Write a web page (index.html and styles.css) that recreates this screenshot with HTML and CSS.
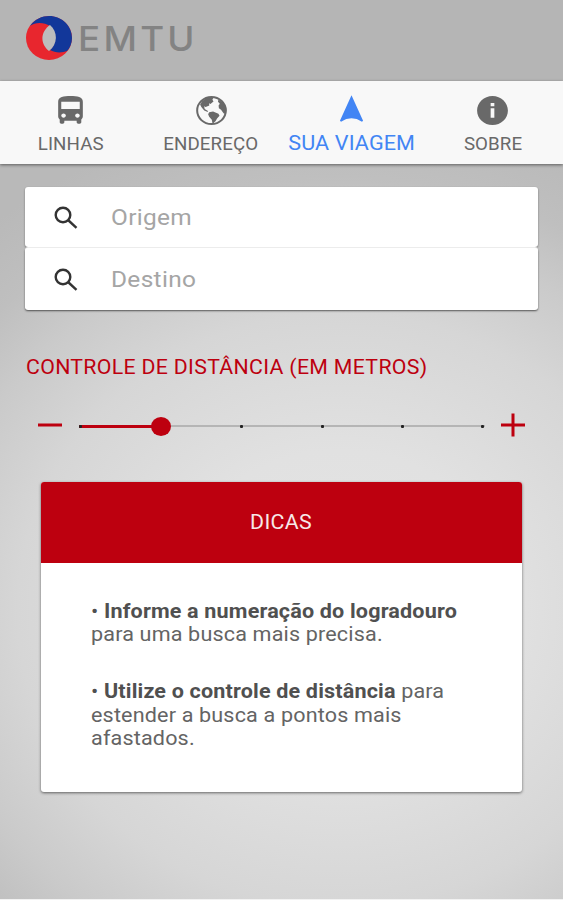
FILE: index.html
```html
<!DOCTYPE html>
<html lang="pt-BR">
<head>
  <meta charset="UTF-8" />
  <meta name="viewport" content="width=device-width, initial-scale=1.0" />
  <title>EMTU - Sua Viagem</title>
  <link rel="stylesheet" href="styles.css">
</head>
<body>
  <header class="header">
    <svg class="logo" viewBox="0 0 46 44" preserveAspectRatio="none">
      <ellipse cx="23" cy="22" rx="23" ry="22" fill="#e8262e" />
      <path d="M4 10C9 3 16 0 23 0C36 0 46 10 46 22C46 27 44 32 41 35C36 37 29 37 24 34C30 29 31 18 24 10C18 6 9 6 4 10Z" fill="#12379a" />
      <path d="M24 9C14 16 14 28 23 35C32 28 32 16 24 9Z" fill="#bdbdbd" />
    </svg>
    <span class="brand">EMTU</span>
  </header>

  <nav class="tabs">
    <a class="tab">
      <svg class="icon" viewBox="0 0 24 24" preserveAspectRatio="none"><path d="M4 16c0 .88.39 1.67 1 2.22V20c0 .55.45 1 1 1h1c.55 0 1-.45 1-1v-1h8v1c0 .55.45 1 1 1h1c.55 0 1-.45 1-1v-1.78c.61-.55 1-1.34 1-2.22V6c0-3.5-3.58-4-8-4s-8 .5-8 4v10zm3.5 1c-.83 0-1.5-.67-1.5-1.5S6.670 14 7.500 14s1.500.67 1.500 1.500S8.330 17 7.500 17zm9 0c-.83 0-1.500-.67-1.500-1.500s.67-1.500 1.500-1.500 1.500.67 1.500 1.500-.67 1.500-1.500 1.500zm1.500-6H6V6h12v5z" /></svg>
      <span class="tab-label">LINHAS</span>
    </a>
    <a class="tab">
      <svg class="icon" viewBox="0 0 24 24" preserveAspectRatio="none">
        <circle cx="12" cy="12" r="9.3" fill="none" stroke="currentColor" stroke-width="1.3" />
        <path d="M6 5.500L9 3.200L13.300 3L12.600 4.600L13.300 5.800L11.300 7.600L10.400 7L10.600 8.600L8.200 9.600L7.200 9L7.600 11L9.700 12.300L9.500 13L7.300 12L5.400 9.600L4.600 7.800Z" />
        <path d="M10.500 13.200L13 12.600L16.500 14.200L17.200 15.600L15.600 17.400L14.700 19.200L12.700 21.200L12.200 18.400L10.500 16.200L9.800 14.500Z" />
        <path d="M16.500 4.200L19.800 7L21.600 11L21.300 14.500L19.800 13.800L18.200 11.500L16.800 10.500L16.600 8.600L17.400 7.400L16.200 6Z" />
      </svg>
      <span class="tab-label">ENDEREÇO</span>
    </a>
    <a class="tab active">
      <svg class="icon" viewBox="0 0 24 24" preserveAspectRatio="none"><path d="M12 1.500L4.500 19L5.200 19.700Q12 15 18.800 19.700L19.500 19Z" /></svg>
      <span class="tab-label">SUA VIAGEM</span>
    </a>
    <a class="tab">
      <svg class="icon" viewBox="0 0 24 24" preserveAspectRatio="none"><path d="M12 2C6.480 2 2 6.480 2 12s4.480 10 10 10 10-4.480 10-10S17.520 2 12 2zm1.200 15h-2.400v-6.500h2.400V17zm0-8h-2.400V6.800h2.400V9z" /></svg>
      <span class="tab-label">SOBRE</span>
    </a>
  </nav>

  <main class="content">
    <form class="search">
      <label class="field">
        <svg class="search-icon" viewBox="0 0 24 23"><circle cx="9" cy="9" r="7.300" /><path d="M14 14L22.500 21.800" /></svg>
        <input type="text" placeholder="Origem" />
      </label>
      <label class="field">
        <svg class="search-icon" viewBox="0 0 24 23"><circle cx="9" cy="9" r="7.300" /><path d="M14 14L22.500 21.800" /></svg>
        <input type="text" placeholder="Destino" />
      </label>
    </form>

    <h1 class="title">CONTROLE DE DISTÂNCIA (EM METROS)</h1>

    <div class="range">
      <svg class="step" viewBox="0 0 24 24"><path d="M0 12H24" /></svg>
      <div class="track">
        <div class="fill"></div>
        <i class="tick"></i>
        <i class="knob"></i>
        <i class="tick"></i>
        <i class="tick"></i>
        <i class="tick"></i>
        <i class="tick"></i>
      </div>
      <svg class="step" viewBox="0 0 24 24"><path d="M0 12H24M12 .5V23.500" /></svg>
    </div>

    <section class="card">
      <h2 class="card-title"><span>DICAS</span></h2>
      <div class="card-body">
        <p><span class="dot">•</span> <strong>Informe a numeração do logradouro</strong><br>para uma busca mais precisa.</p>
        <p><span class="dot">•</span> <strong>Utilize o controle de distância</strong> para<br>estender a busca a pontos mais<br>afastados.</p>
      </div>
    </section>
  </main>
</body>
</html>
```

FILE: styles.css
```css
:root {
  --red: #bd000f;
  --blue: #4285f4;
  --gray: #696969;
  --white: #fff;
}

* {
  box-sizing: border-box;
}

body {
  margin: 0;
  height: 900px;
  overflow: hidden;
  font-family: Roboto, "Liberation Sans", sans-serif;
  background: radial-gradient(ellipse 620px 570px at 340px 610px, #e5e5e5 0%, #e1e1e1 28%, #d6d6d6 52%, #cacaca 66%, #bfbfbf 76%, #b9b9b9 88%);
  border-bottom: 1px solid #f2f2f2;
}

.header {
  display: flex;
  align-items: center;
  height: 81px;
  padding: 0 26px 5px;
  background: #b5b5b5;
}

.logo {
  width: 46px;
  height: 44px;
}

.brand {
  margin-left: 6px;
  font-family: Inter, sans-serif;
  font-size: 34px;
  font-weight: 500;
  letter-spacing: 3px;
  color: #838383;
  transform: scaleX(1.08);
  transform-origin: left;
}

.tabs {
  display: flex;
  height: 83px;
  background: #f8f8f8;
  box-shadow: 0 1px 3px rgba(0, 0, 0, 0.5);
}

.tab {
  flex: 1;
  display: flex;
  flex-direction: column;
  align-items: center;
  padding-top: 12px;
  color: var(--gray);
}

.icon {
  width: 37px;
  height: 35px;
  fill: currentColor;
}

.tab-label {
  margin-top: 5px;
  font-size: 18px;
  line-height: 22px;
  letter-spacing: 0.1px;
  white-space: nowrap;
  transform: scaleX(1.04);
}

.tab.active {
  color: var(--blue);
}

.active .tab-label {
  margin-top: 4px;
  font-size: 20px;
  transform: scaleX(1.08);
}

.content {
  padding: 23px 25px 0;
}

.field {
  display: flex;
  align-items: center;
  height: 60px;
  padding-left: 29px;
  background: var(--white);
  border-radius: 3px;
  box-shadow: 0 1px 2px rgba(0, 0, 0, 0.45);
}

.field + .field {
  position: relative;
  height: 62px;
  margin-top: 1px;
  box-shadow: 0 -1px 0 #ececec, 0 1px 2px rgba(0, 0, 0, 0.6);
}

.search-icon {
  width: 24px;
  height: 23px;
  fill: none;
  stroke: #333;
  stroke-width: 2.4;
}

.field input {
  width: 300px;
  margin-left: 33px;
  padding: 0;
  border: none;
  outline: none;
  background: none;
  font-family: inherit;
  font-size: 22px;
  letter-spacing: 0.3px;
  transform: scaleX(1.11);
  transform-origin: left;
}

.field input::placeholder {
  color: #a5a5a5;
}

.title {
  margin: 44px 0 0 1px;
  font-size: 20px;
  font-weight: 400;
  line-height: 26px;
  letter-spacing: 0.3px;
  white-space: nowrap;
  color: var(--red);
  transform: scaleX(1.064);
  transform-origin: left;
}

.range {
  display: flex;
  align-items: center;
  justify-content: space-between;
  height: 24px;
  margin-top: 33px;
  padding: 0 13px;
}

.step {
  width: 24px;
  height: 24px;
  fill: none;
  stroke: var(--red);
  stroke-width: 3;
}

.track {
  position: relative;
  display: flex;
  align-items: center;
  justify-content: space-between;
  width: 406px;
  height: 20px;
  margin-top: 2px;
  background: linear-gradient(#b5b5b5, #b5b5b5) center / 100% 2px no-repeat;
}

/* active part of the range, up to the knob */
.fill {
  position: absolute;
  left: 0;
  width: 82px;
  height: 3px;
  background: var(--red);
}

.tick {
  position: relative;
  width: 3px;
  height: 3px;
  border-radius: 1px;
  background: #222;
}

.knob {
  position: relative;
  width: 20px;
  height: 19px;
  margin: 0 -8px;
  border-radius: 50%;
  background: var(--red);
}

.card {
  height: 310px;
  margin: 45px 16px 0;
  border-radius: 3px;
  overflow: hidden;
  background: var(--white);
  box-shadow: 0 1px 3px rgba(0, 0, 0, 0.55);
}

.card-title {
  margin: 0;
  font-size: 20px;
  font-weight: 400;
  line-height: 80px;
  height: 81px;
  letter-spacing: 0.3px;
  text-align: center;
  color: #f7e8e8;
  background: var(--red);
}

.card-title span {
  display: inline-block;
  transform: scaleX(1.066);
}

.card-body {
  padding: 37px 0 0 50px;
  font-size: 20px;
  line-height: 23.2px;
  letter-spacing: 0.15px;
  white-space: nowrap;
  color: #646464;
}

.card-body p {
  margin: 0 0 34px;
  transform: scaleX(1.078);
  transform-origin: left;
}

.card-body strong {
  font-weight: 700;
  color: #505050;
}

.dot {
  color: #505050;
}
```
